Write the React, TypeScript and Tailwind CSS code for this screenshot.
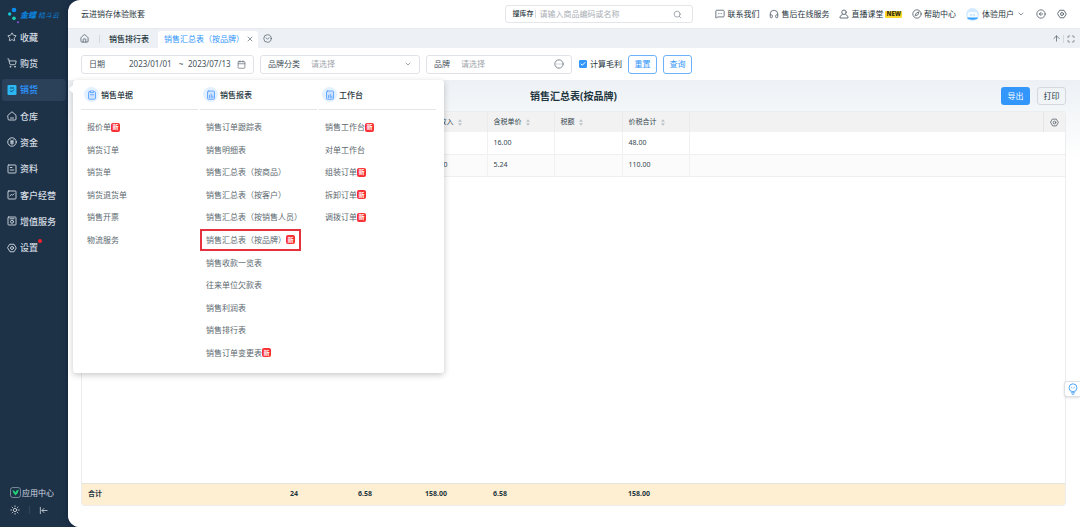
import React from "react";
import {
  ArrowUp,
  Calendar,
  Check,
  ChevronDown,
  CircleArrowLeft,
  CircleChevronDown,
  CircleEllipsis,
  Compass,
  Headphones,
  Maximize,
  MessageSquareMore,
  Search,
  ShoppingCart,
  Star,
  Sun,
  X,
} from "lucide-react";

type IconProps = { className?: string };

function Glyph({ className, children }: { className?: string; children: React.ReactNode }) {
  return (
    <svg
      viewBox="0 0 20 20"
      fill="none"
      stroke="currentColor"
      strokeWidth="1.8"
      strokeLinecap="round"
      strokeLinejoin="round"
      aria-hidden="true"
      className={className}
    >
      {children}
    </svg>
  );
}

const HomeIcon = ({ className }: IconProps) => (
  <Glyph className={className}>
    <path d="M2 9 Q2 8 3 7 L8.5 2.2 Q10 1.2 11.5 2.2 L17 7 Q18 8 18 9 V16 Q18 18 16 18 H4 Q2 18 2 16 Z" />
    <path d="M7 17.5 V12.5 Q7 11 8.5 11 H11.5 Q13 11 13 12.5 V17.5" />
  </Glyph>
);
const WarehouseIcon = ({ className }: IconProps) => (
  <Glyph className={className}>
    <path d="M2 8.5 L10 1.5 L18 8.5 V16 Q18 18 16 18 H4 Q2 18 2 16 Z" />
    <path d="M7 14 H13" />
  </Glyph>
);
const YuanIcon = ({ className }: IconProps) => (
  <Glyph className={className}>
    <circle cx="10" cy="10" r="8.5" />
    <path d="M7 5.5 L10 9 L13 5.5 M10 9 V15 M7 9.5 H13 M7 12.2 H13" />
  </Glyph>
);
const DataIcon = ({ className }: IconProps) => (
  <Glyph className={className}>
    <rect x="2" y="2" width="16" height="16" rx="1.5" />
    <path d="M6.5 7 H10 M6.5 12 H13.5" />
  </Glyph>
);
const TrendIcon = ({ className }: IconProps) => (
  <Glyph className={className}>
    <rect x="2" y="2" width="16" height="16" rx="1.5" />
    <path d="M6 11.5 L9 9 L11 10.5 L14 7.5" />
  </Glyph>
);
const ServiceIcon = ({ className }: IconProps) => (
  <Glyph className={className}>
    <rect x="2" y="2" width="16" height="16" rx="1.5" />
    <path d="M6 5.5 H14" />
    <circle cx="10" cy="11.5" r="3" />
  </Glyph>
);
const HexGear = ({ className }: IconProps) => (
  <Glyph className={className}>
    <path d="M6 2.5 H14 L18.5 10 L14 17.5 H6 L1.5 10 Z" />
    <circle cx="10" cy="10" r="3" />
  </Glyph>
);
const TeacherIcon = ({ className }: IconProps) => (
  <Glyph className={className}>
    <circle cx="10" cy="6.5" r="4.5" />
    <path d="M7 10.5 L2 15 V18 H18 V15 L13 10.5" />
  </Glyph>
);
const SalesIcon = ({ className }: IconProps) => (
  <svg viewBox="0 0 20 20" aria-hidden="true" className={className}>
    <rect x="1" y="0" width="18" height="20" rx="2" fill="#2bb8f5" />
    <path d="M6 6 H14 M6 11 L9 14 L14 9" stroke="#123a5c" strokeWidth="1.8" fill="none" />
  </svg>
);
const CollapseIcon = ({ className }: IconProps) => (
  <Glyph className={className}>
    <path d="M3 3 V17 M18 10 H7 M11 5.5 L6.5 10 L11 14.5" />
  </Glyph>
);
const ClipboardIcon = ({ className }: IconProps) => (
  <Glyph className={className}>
    <rect x="3" y="3" width="14" height="15.5" rx="2" fill="#cfe3ff" />
    <path d="M7 1.8 H13 V5 H7 Z" fill="#ffffff" />
    <path d="M7 9.5 H13" />
  </Glyph>
);
const ReportIcon = ({ className }: IconProps) => (
  <Glyph className={className}>
    <rect x="3" y="2" width="14" height="16.5" rx="2" fill="#cfe3ff" />
    <path d="M7 15 V11 M10.5 15 V8.5 M13.7 15 V12" />
  </Glyph>
);

const navItems = [
  { label: "收藏", Icon: Star },
  { label: "购货", Icon: ShoppingCart },
  { label: "销货", Icon: SalesIcon, active: true },
  { label: "仓库", Icon: WarehouseIcon },
  { label: "资金", Icon: YuanIcon },
  { label: "资料", Icon: DataIcon },
  { label: "客户经营", Icon: TrendIcon },
  { label: "增值服务", Icon: ServiceIcon },
  { label: "设置", Icon: HexGear, dot: true },
];

function Sidebar() {
  return (
    <aside className="flex w-[68px] shrink-0 flex-col bg-[#1d3247] text-[#d5dce3]">
      <div className="flex h-6 items-center pl-[7px] pt-1.5">
        <svg viewBox="0 0 36 51" className="h-[17px] w-3" aria-hidden="true">
          <circle cx="21" cy="9" r="7" fill="#0a8cf0" />
          <circle cx="8" cy="21" r="5" fill="#12c8d8" />
          <circle cx="21" cy="34" r="5.5" fill="#19d0b4" />
          <circle cx="33" cy="46" r="3" fill="#8a55e8" />
        </svg>
        <span className="ml-px flex items-center gap-0.5 whitespace-nowrap text-[8px] italic leading-none text-[#0d7fd6]">
          <b className="font-black">金蝶</b>
          <span className="text-[7px]">精斗云</span>
        </span>
      </div>
      <nav className="grid h-[237px] auto-rows-fr px-0.5">
        {navItems.map(({ label, Icon, active, dot }) => (
          <a
            key={label}
            href="#"
            className={
              "my-0.5 flex items-center gap-[3px] rounded-[3px] pl-[5px] text-[9px] leading-none " +
              (active ? "bg-[#2a4159] font-bold text-[#2d8cf0]" : "font-medium")
            }
          >
            <Icon className="size-[10px] shrink-0" />
            <span className="relative whitespace-nowrap">
              {label}
              {dot && <i className="absolute -right-1 -top-1 size-1 rounded-full bg-[#f5222d]" />}
            </span>
          </a>
        ))}
      </nav>
      <div className="mt-auto pb-3">
        <a href="#" className="flex items-center gap-px pl-2.5 text-[8px] leading-[10px]">
          <svg viewBox="0 0 20 20" className="size-[11px]" aria-hidden="true">
            <rect x="1" y="1" width="18" height="18" rx="4" fill="none" stroke="#8b98a5" strokeWidth="1.6" />
            <path d="M4.5 6 Q9 6 9.8 10 Q11 5 16 4.5 Q15.5 11 10 15.5 Q5.5 12 4.5 6 Z" fill="#22d07a" />
          </svg>
          应用中心
        </a>
        <div className="mt-[7px] flex items-center pl-2.5">
          <button type="button" aria-label="主题">
            <Sun className="size-[10px]" />
          </button>
          <i className="mx-[9px] h-2 w-px bg-[#31465b]" />
          <button type="button" aria-label="收起">
            <CollapseIcon className="size-[9px]" />
          </button>
        </div>
      </div>
    </aside>
  );
}

function TopBar() {
  return (
    <header className="flex h-7 shrink-0 items-center pl-[13px] pr-[13px]">
      <span className="whitespace-nowrap">云进销存体验账套</span>
      <div className="ml-auto flex h-[18px] w-[188px] items-center rounded-[3px] border border-[#e3e5e8] pl-1.5 pr-2.5">
        <label htmlFor="stock" className="shrink-0 border-r border-[#d8dce0] pr-0.5 text-[7px] leading-[8px] font-medium">
          搜库存
        </label>
        <input
          id="stock"
          placeholder="请输入商品编码或名称"
          className="min-w-0 flex-1 pl-[3px] outline-none placeholder:text-[#a9aeb4]"
        />
        <Search className="size-[9px] text-[#8a9299]" />
      </div>
      <div className="ml-[22px] flex items-center gap-[10px] whitespace-nowrap">
        <a href="#" className="flex items-center gap-0.5">
          <MessageSquareMore className="size-[10px] text-[#55626c]" />
          联系我们
        </a>
        <a href="#" className="flex items-center gap-0.5">
          <Headphones className="size-[10px] text-[#55626c]" />
          售后在线服务
        </a>
        <a href="#" className="flex items-center gap-0.5">
          <TeacherIcon className="size-[10px] text-[#55626c]" />
          直播课堂
          <b className="rounded-[1px] bg-[#ffd92e] px-px text-[6px] leading-[7px] font-black text-[#3b3410]">NEW</b>
        </a>
        <a href="#" className="flex items-center gap-0.5">
          <Compass className="size-[10px] text-[#55626c]" />
          帮助中心
        </a>
      </div>
      <div className="ml-[10px] flex items-center gap-[11px] whitespace-nowrap">
        <button type="button" className="flex items-center gap-[3px]">
          <svg viewBox="0 0 26 26" className="size-[13px]" aria-hidden="true">
            <circle cx="13" cy="13" r="13" fill="#d3eaff" />
            <rect x="3" y="8" width="20" height="12" rx="5" fill="#f6fbff" />
            <path d="M3 19 H23 V22 Q13 25 3 22 Z" fill="#36a3ff" />
            <path d="M9 14 H11 M15 14 H17" stroke="#36a3ff" strokeWidth="1.6" />
          </svg>
          体验用户
          <ChevronDown className="size-2 text-[#55626c]" />
        </button>
        <button type="button" aria-label="返回">
          <CircleArrowLeft className="size-[10px] text-[#55626c]" />
        </button>
        <button type="button" aria-label="系统设置">
          <HexGear className="size-[10px] text-[#55626c]" />
        </button>
      </div>
    </header>
  );
}

function TabBar() {
  return (
    <div className="flex h-5 shrink-0 items-center border-t border-[#e6eaee] bg-[#edf1f5] pl-3 pr-[5px]">
      <a href="#" aria-label="首页">
        <HomeIcon className="size-[9px] text-[#55626c]" />
      </a>
      <i className="ml-2.5 h-2 w-px bg-[#d3d8dd]" />
      <a href="#" className="ml-[9px] font-medium">
        销售排行表
      </a>
      <div className="ml-[9px] flex h-[17px] items-center gap-0.5 self-end rounded-t-[3px] bg-white pb-0.5 pl-1.5 pr-1 text-[#3296fa]">
        <a href="#">销售汇总表（按品牌）</a>
        <button type="button" aria-label="关闭">
          <X className="size-2 text-[#55626c]" />
        </button>
      </div>
      <button type="button" aria-label="更多标签" className="ml-[5px]">
        <CircleChevronDown className="size-[9px] text-[#55626c]" />
      </button>
      <button type="button" aria-label="收起顶部" className="ml-auto">
        <ArrowUp className="size-[9px] text-[#55626c]" />
      </button>
      <i className="ml-0.5 mr-[3px] h-2 w-px bg-[#d3d8dd]" />
      <button type="button" aria-label="全屏">
        <Maximize className="size-2 text-[#55626c]" />
      </button>
    </div>
  );
}

const fieldBox = "flex h-[19px] items-center rounded-[3px] border border-[#dfe2e6] px-[7px]";

function Filters() {
  return (
    <form className="flex h-8 shrink-0 items-center gap-[6px] whitespace-nowrap pl-[13px] text-[#45525b]">
      <div className={fieldBox + " w-[173px]"}>
        <label htmlFor="from">日期</label>
        <input id="from" defaultValue="2023/01/01" className="ml-6 w-[46px] outline-none" />
        <span className="w-3 text-center">~</span>
        <input aria-label="结束日期" defaultValue="2023/07/13" className="ml-px w-[46px] outline-none" />
        <Calendar className="ml-auto size-[9px] shrink-0 text-[#6b767f]" />
      </div>
      <div className={fieldBox + " w-[160px]"}>
        <label htmlFor="category">品牌分类</label>
        <select id="category" className="ml-[11px] min-w-0 flex-1 appearance-none text-[#a0a6ac] outline-none">
          <option>请选择</option>
        </select>
        <ChevronDown className="size-2 text-[#6b767f]" />
      </div>
      <div className={fieldBox + " w-[146px]"}>
        <label htmlFor="brand">品牌</label>
        <input
          id="brand"
          placeholder="请选择"
          className="ml-[11px] min-w-0 flex-1 outline-none placeholder:text-[#a0a6ac]"
        />
        <CircleEllipsis className="size-[10px] text-[#6b767f]" />
      </div>
      <label className="relative flex items-center gap-[3px] pl-px text-[#1f3640]">
        <input
          type="checkbox"
          defaultChecked
          className="peer size-2 appearance-none rounded-[1px] border border-[#3296fa] checked:bg-[#3296fa]"
        />
        <Check className="absolute left-0.5 size-1.5 text-white opacity-0 peer-checked:opacity-100" strokeWidth={4} />
        计算毛利
      </label>
      <button type="button" className="h-[19px] w-[29px] rounded-[3px] border border-[#6cb2fb] text-[#3296fa]">
        重置
      </button>
      <button type="button" className="h-[19px] w-[29px] rounded-[3px] border border-[#6cb2fb] text-[#3296fa]">
        查询
      </button>
    </form>
  );
}

function Sorter() {
  return (
    <svg viewBox="0 0 10 16" className="ml-1 inline-block h-[7px] w-1" aria-hidden="true">
      <path d="M5 0 L10 6 H0 Z M0 10 H10 L5 16 Z" fill="#bcc2c7" />
    </svg>
  );
}

const columns = ["", "", "", "销售收入", "含税单价", "税额", "价税合计"];
const rows = [
  ["", "", "", "", "16.00", "", "48.00"],
  ["", "", "", "110.00", "5.24", "", "110.00"],
];
const totals = ["合计", "24", "6.58", "158.00", "6.58", "", "158.00"];

function Report() {
  return (
    <section className="flex min-h-0 flex-1 flex-col bg-linear-to-b from-[#edf1f5] to-white to-[80px] px-[13px] pb-[21px] pr-[14px]">
      <div className="grid h-[31px] shrink-0 grid-cols-[1fr_auto_1fr] items-center">
        <h1 className="col-start-2 text-[10px] leading-4 font-bold">销售汇总表(按品牌)</h1>
        <div className="flex justify-end gap-[7px]">
          <button type="button" className="h-[18px] w-[29px] rounded-[3px] bg-[#3296fa] text-white">
            导出
          </button>
          <button type="button" className="h-[18px] w-[29px] rounded-[3px] border border-[#d5d9dd]">
            打印
          </button>
        </div>
      </div>
      <div className="grid min-h-0 flex-1 overflow-hidden rounded-[3px] border border-[#ebedef] bg-white">
        <table className="h-full w-full table-fixed border-collapse text-left text-[7px] leading-3 text-[#33444e]">
          <colgroup>
            <col className="w-[202px]" />
            <col className="w-[68px]" />
            <col className="w-[67px]" />
            <col className="w-[68px]" />
            <col className="w-[67px]" />
            <col className="w-[68px]" />
            <col className="w-[67px]" />
            <col />
            <col className="w-[22px]" />
          </colgroup>
          <thead>
            <tr className="h-5 bg-[#f2f2f2]">
              {columns.map((name, i) => (
                <th key={i} className="whitespace-nowrap border-r border-[#e9ebed] pl-1.5 font-normal">
                  {name}
                  {name && <Sorter />}
                </th>
              ))}
              <th className="border-r border-[#e2e4e6]" />
              <th>
                <button type="button" aria-label="列设置" className="flex w-full justify-center">
                  <HexGear className="size-[9px] text-[#55626c]" />
                </button>
              </th>
            </tr>
          </thead>
          <tbody>
            {rows.map((row, r) => (
              <tr key={r} className="h-[22px] border-b border-[#edeff0] even:bg-[#fbfbfb]">
                {row.map((cell, i) => (
                  <td key={i} className="border-r border-[#f0f1f2] pl-1.5">
                    {cell}
                  </td>
                ))}
                <td colSpan={2} />
              </tr>
            ))}
            <tr>
              <td colSpan={9} />
            </tr>
          </tbody>
          <tfoot>
            <tr className="h-[22px] border-t border-[#e6e3dc] bg-[#feefd3] font-bold text-[#1f3640]">
              {totals.map((cell, i) => (
                <td key={i} className="pl-1.5">
                  {cell}
                </td>
              ))}
              <td colSpan={2} />
            </tr>
          </tfoot>
        </table>
      </div>
    </section>
  );
}

type MenuEntry = { label: string; fresh?: boolean; marked?: boolean };

const menu: { title: string; Icon: React.FC<IconProps>; items: MenuEntry[] }[] = [
  {
    title: "销售单据",
    Icon: ClipboardIcon,
    items: [
      { label: "报价单", fresh: true },
      { label: "销货订单" },
      { label: "销货单" },
      { label: "销货退货单" },
      { label: "销售开票" },
      { label: "物流服务" },
    ],
  },
  {
    title: "销售报表",
    Icon: ReportIcon,
    items: [
      { label: "销售订单跟踪表" },
      { label: "销售明细表" },
      { label: "销售汇总表（按商品）" },
      { label: "销售汇总表（按客户）" },
      { label: "销售汇总表（按销售人员）" },
      { label: "销售汇总表（按品牌）", fresh: true, marked: true },
      { label: "销售收款一览表" },
      { label: "往来单位欠款表" },
      { label: "销售利润表" },
      { label: "销售排行表" },
      { label: "销售订单变更表", fresh: true },
    ],
  },
  {
    title: "工作台",
    Icon: ReportIcon,
    items: [
      { label: "销售工作台", fresh: true },
      { label: "对单工作台" },
      { label: "组装订单", fresh: true },
      { label: "拆卸订单", fresh: true },
      { label: "调拨订单", fresh: true },
    ],
  },
];

function FlyoutMenu() {
  return (
    <div className="absolute left-[73px] top-20 z-10 rounded-[3px] bg-white px-2 pb-[9px] shadow-[0_2px_6px_rgba(0,0,0,0.22)]">
      <i className="absolute -left-[3px] top-[6px] size-1.5 rotate-45 bg-white" />
      <div className="grid grid-cols-[repeat(3,117px)] gap-x-0.5">
        {menu.map(({ title, Icon, items }) => (
          <section key={title}>
            <h2 className="flex h-[30px] items-center gap-0.5 border-b border-[#e4e6e9] pl-[3px] font-medium">
              <span className="flex size-[15px] items-center justify-center rounded-full bg-[#e3f0ff]">
                <Icon className="size-[10px] text-[#5aa2ff]" />
              </span>
              {title}
            </h2>
            <ul className="mt-[6px] grid h-[248px] grid-rows-[repeat(11,minmax(0,1fr))] text-[#5c686f]">
              {items.map(({ label, fresh, marked }) => (
                <li key={label} className="flex">
                  <a
                    href="#"
                    className={
                      "flex items-center whitespace-nowrap border-2 px-1 " +
                      (marked ? "border-[#e5323c]" : "border-transparent")
                    }
                  >
                    <span>{label}</span>
                    {fresh && (
                      <b className="flex size-[9px] items-center justify-center rounded-[2px] bg-[#fa2f35] text-[6px] leading-none text-white">
                        新
                      </b>
                    )}
                  </a>
                </li>
              ))}
            </ul>
          </section>
        ))}
      </div>
    </div>
  );
}

export default function App() {
  return (
    <div
      lang="zh-CN"
      className="relative flex h-screen w-full overflow-hidden bg-[#1d3247] font-['Noto_Sans','Noto_Sans_CJK_SC',sans-serif] text-[8px] leading-3 text-[#1f3640]"
    >
      <Sidebar />
      <main className="flex min-w-0 flex-1 flex-col overflow-hidden rounded-l-xl bg-white shadow-[0_0_6px_#10203a]">
        <TopBar />
        <TabBar />
        <Filters />
        <Report />
      </main>
      <FlyoutMenu />
      <button
        type="button"
        aria-label="智能助手"
        className="absolute right-0 top-[381px] flex size-4 items-center justify-center rounded-l-[3px] border border-r-0 border-[#dde1e5] bg-white shadow-sm"
      >
        <svg viewBox="0 0 24 28" className="h-3 w-2.5" fill="none" stroke="#3296fa" strokeWidth="2" aria-hidden="true">
          <circle cx="12" cy="11" r="9.5" />
          <path d="M7.5 11.5 Q9 9 10.5 11.5 M13.5 11.5 Q15 9 16.5 11.5 M7 23 H17 M9 26.5 H15" />
        </svg>
      </button>
    </div>
  );
}
